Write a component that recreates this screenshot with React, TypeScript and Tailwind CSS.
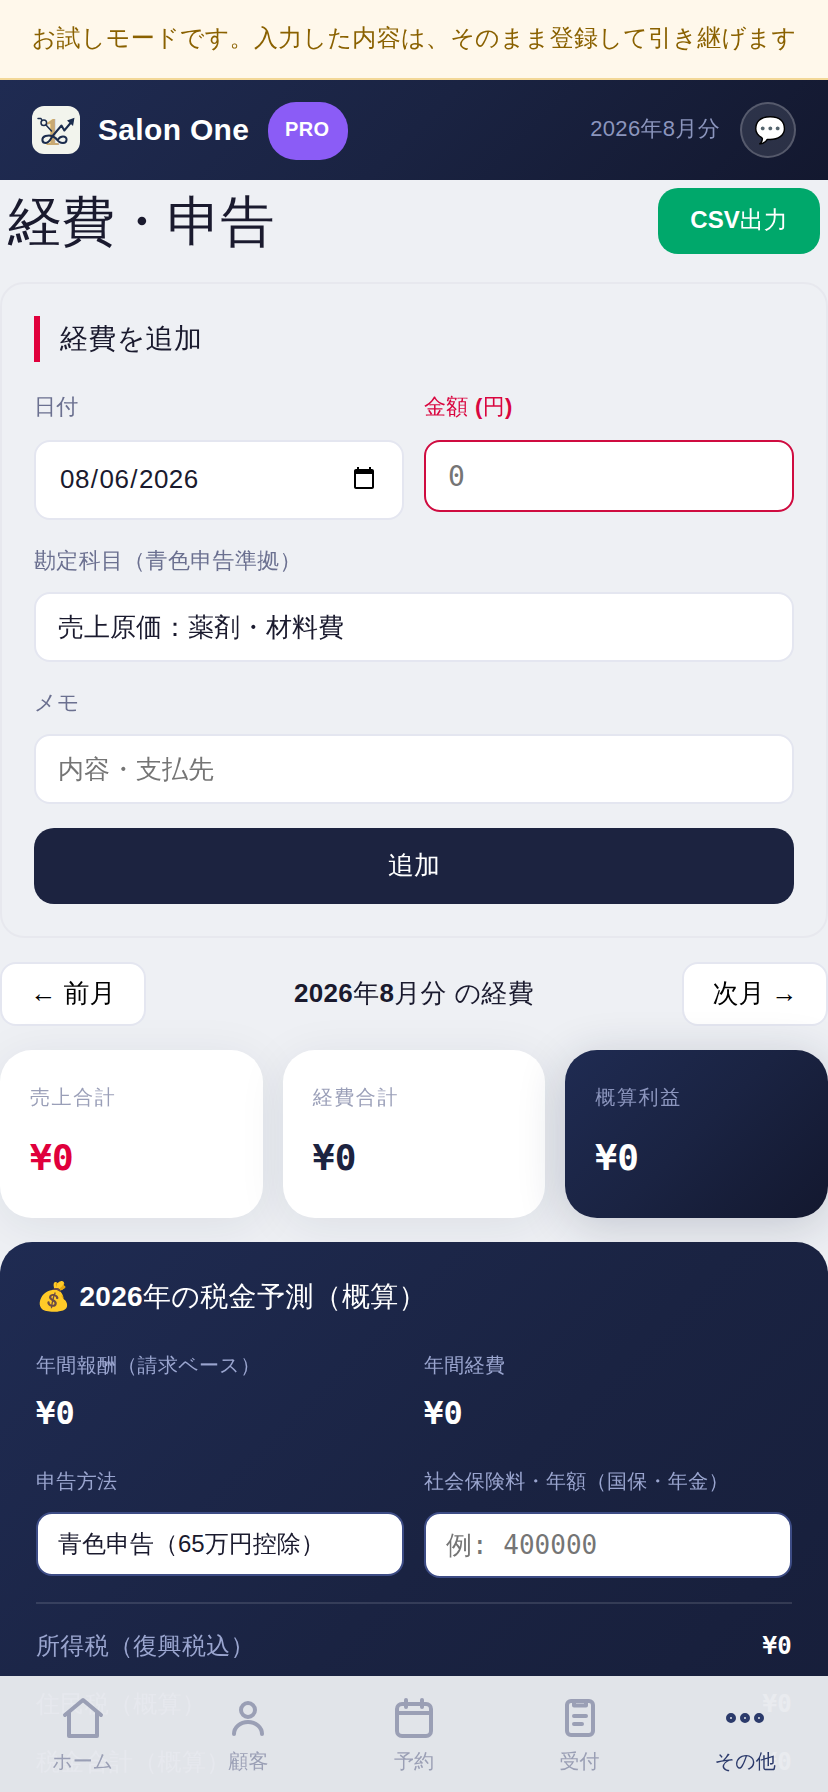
import { useState } from 'react'
import type { ReactNode } from 'react'
import clsx from 'clsx'

const sans = "font-['Liberation_Sans','WenQuanYi_Zen_Hei','Noto_Sans_CJK_JP',sans-serif]";
const mono = "font-['DejaVu_Sans_Mono','WenQuanYi_Zen_Hei','Noto_Sans_CJK_JP',monospace]";

const tabs: { id: string; label: string; icon: ReactNode }[] = [
  {
    id: 'home',
    label: 'ホーム',
    icon: <path d="M3 10.5 12 3l9 7.5M5 9.5V21h14V9.5" />,
  },
  {
    id: 'customers',
    label: '顧客',
    icon: (
      <>
        <circle cx="12" cy="8" r="3.5" />
        <path d="M5 20c0-3.3 3.1-6 7-6s7 2.7 7 6" />
      </>
    ),
  },
  {
    id: 'reserve',
    label: '予約',
    icon: (
      <>
        <rect x="3.5" y="5" width="17" height="16" rx="2.5" />
        <path d="M3.5 9.5h17M8 3v3.5M16 3v3.5" />
      </>
    ),
  },
  {
    id: 'reception',
    label: '受付',
    icon: (
      <>
        <rect x="5.5" y="3.5" width="13" height="17" rx="2" />
        <path d="M9 3.5v2.2h6V3.5M9 11h6M9 15h4" />
      </>
    ),
  },
  {
    id: 'more',
    label: 'その他',
    icon: (
      <>
        <circle cx="5" cy="12" r="1.5" />
        <circle cx="12" cy="12" r="1.5" />
        <circle cx="19" cy="12" r="1.5" />
      </>
    ),
  },
];

const taxRows = [
  { label: '所得税（復興税込）', value: '¥0' },
  { label: '住民税（概算）', value: '¥0' },
  { label: '税金合計（概算）', value: '¥0' },
];

function Logo() {
  return (
    <svg viewBox="0 0 48 48" className="h-12 w-12 rounded-xl bg-[#f2f4ed]">
      <text x="12" y="38.5" fontSize="40" fontWeight="700" fill="#c8a972" fontFamily="Liberation Serif" textLength="17" lengthAdjust="spacingAndGlyphs">1</text>
      <g fill="none" stroke="#1b2c4d" strokeWidth="2" strokeLinecap="round" strokeLinejoin="round">
        <circle cx="11.8" cy="16.8" r="2.8" strokeWidth="1.5" />
        <path d="M6 12.5h3l1 2M14 19l5.500 6" strokeWidth="1.500" />
        <path d="M39 16.500 32.300 24.500 29.500 19.500 21 29.500c-2.500 3.500-3.500 7.500-7 7.500-4.500 0-5-5.500-.5-7 4-1.200 7.500-.5 10.500 2.500" />
        <path d="M24 32.500c2 3 4.500 4.500 7 4.500 4.500 0 5-6.500 0-6.500-2.500 0-4 1.500-5 3" />
      </g>
      <path d="M42.500 11.700l-1.500 8.300-6-5.500z" fill="#1b2c4d" />
    </svg>
  )
}

function SummaryCard({ label, value, className, labelClass }: { label: string; value: string; className: string; labelClass: string }) {
  return (
    <div className={clsx('flex h-[168px] flex-1 flex-col rounded-[32px] px-[30px] pt-8', className)}>
      <span className={clsx('text-[20px] leading-[30px] tracking-[1.6px]', labelClass)}>{label}</span>
      <span className={clsx(mono, 'mt-[25px] text-[36px] leading-[42px] font-bold')}>{value}</span>
    </div>
  )
}

function App() {
  const [activeTab, setActiveTab] = useState('more');
  const [date, setDate] = useState('2026-08-06');

  return (
    <div className={clsx(sans, 'h-[1792px] w-full overflow-hidden bg-[#eef0f4] tracking-[0.32px] text-[#1a1a2e]')}>
      {/* お試しバナー */}
      <div className="flex h-20 items-center justify-center border-b-2 border-[#f3d898] bg-[#fff8eb] pb-0.5 text-[24px] whitespace-nowrap text-[#8a6100]">
        お試しモードです。入力した内容は、そのまま登録して引き継げます
      </div>

      <header className="flex h-[100px] items-center justify-between bg-linear-135 from-[#1f2b52] via-[#1a2342] to-[#13182f] px-8">
        <div className="flex items-center">
          <Logo />
          <span className="ml-[18px] pb-0.5 text-[30px] font-bold text-white">Salon One</span>
          <span className="mt-0.5 ml-[19px] flex h-[58px] w-20 items-center justify-center rounded-[28px] bg-[#8b5cf6] pr-0.5 pb-1 text-[20px] font-bold text-white">PRO</span>
        </div>
        <div className="flex items-center gap-5">
          <span className="pb-1 text-[22px] text-[#8b95bd]">2026年8月分</span>
          <button className="flex h-14 w-14 items-center justify-center rounded-full border-2 border-white/20 bg-white/10 pl-1 text-[26px]">💬</button>
        </div>
      </header>

      <main>
        <div className="flex h-[102px] items-start justify-between px-2 pt-2">
          <h1 className="text-[54px] leading-[66px] tracking-[-0.9px]">経費・申告</h1>
          <button className="h-[66px] w-[162px] rounded-[20px] bg-[#00a86b] pb-0.5 text-[24px] tracking-normal text-white">
            <span className="font-bold">CSV</span>出力
          </button>
        </div>

        {/* 経費フォーム */}
        <section className="h-[656px] rounded-3xl border-2 border-[#e7e8ee] p-8">
          <h2 className="h-[46px] border-l-[6px] border-[#e0003c] pl-5 text-[28px] leading-[46px]">経費を追加</h2>
          <div className="grid grid-cols-2 gap-5">
            <label className="flex flex-col">
              <span className="mt-[28px] mb-[17px] h-[33px] text-[22px] leading-[33px] text-[#6b7090]">日付</span>
              <input
                type="date"
                value={date}
                onChange={(e) => setDate(e.target.value)}
                className="h-20 rounded-2xl border-2 border-[#e4e6f0] bg-white px-[23px] pb-0.5 text-[26px] tracking-[0.45px]"
              />
            </label>
            <label className="flex flex-col">
              <span className="mt-[28px] mb-[17px] h-[33px] text-[22px] leading-[33px] text-[#d9063f]">
                金額 <span className="font-bold">(</span>円<span className="font-bold">)</span>
              </span>
              <input placeholder="0" className={clsx(mono, 'h-[72px] rounded-2xl border-2 border-[#cf0c40] bg-white px-[22px] text-[28px] tracking-normal placeholder:text-[#757575]')} />
            </label>
          </div>
          <label className="flex flex-col">
            <span className="mt-6 mb-[15px] h-[33px] text-[22px] leading-[33px] text-[#6b7090]">勘定科目（青色申告準拠）</span>
            <select className="h-[70px] appearance-none rounded-2xl border-2 border-[#e4e6f0] bg-white px-[22px] text-[26px] tracking-normal">
              <option>売上原価：薬剤・材料費</option>
            </select>
          </label>
          <label className="flex flex-col">
            <span className="mt-6 mb-[15px] h-[33px] text-[22px] leading-[33px] text-[#6b7090]">メモ</span>
            <input placeholder="内容・支払先" className="h-[70px] rounded-2xl border-2 border-[#e4e6f0] bg-white px-[22px] text-[26px] tracking-normal placeholder:text-[#757575]" />
          </label>
          <button className="mt-6 h-[76px] w-full rounded-[20px] bg-[#1c2340] pb-0.5 text-[26px] tracking-normal text-white">追加</button>
        </section>

        {/* 月送り */}
        <div className="mt-6 flex h-16 items-center justify-between">
          <button className="h-16 w-[146px] rounded-2xl border-2 border-[#e4e6f0] bg-white pb-0.5 text-[26px] tracking-normal text-black">← 前月</button>
          <span className="pb-0.5 text-[26px]">
            <span className="font-bold">2026</span>年<span className="font-bold">8</span>月分 の経費
          </span>
          <button className="h-16 w-[146px] rounded-2xl border-2 border-[#e4e6f0] bg-white pb-0.5 text-[26px] tracking-normal text-black">次月 →</button>
        </div>

        <div className="mt-6 flex gap-5">
          <SummaryCard label="売上合計" value="¥0" className="bg-white text-[#e0003c] shadow-[0_8px_48px_rgba(26,34,64,0.08)]" labelClass="text-[#9a9fb8]" />
          <SummaryCard label="経費合計" value="¥0" className="bg-white text-[#1c2340] shadow-[0_8px_48px_rgba(26,34,64,0.08)]" labelClass="text-[#9a9fb8]" />
          <SummaryCard label="概算利益" value="¥0" className="bg-linear-135 from-[#1f2b52] via-[#1a2342] to-[#13182f] text-white shadow-[0_8px_48px_rgba(26,34,64,0.2)]" labelClass="text-[#8b95bd]" />
        </div>

        {/* 税金予測 */}
        <section className="relative mt-6 h-[640px] rounded-[32px] bg-linear-135 from-[#1f2b52] via-[#1a2342] to-[#161d38] px-9 pt-8 text-white">
          <h2 className="h-[44px] text-[28px] leading-[46px]">
            <span className="font-bold">💰 2026</span>年の税金予測（概算）
          </h2>
          <div className="mt-8 grid grid-cols-2 gap-5">
            <div className="flex flex-col">
              <span className="text-[20px] leading-[30px] text-[#9aa5cf]">年間報酬（請求ベース）</span>
              <span className={clsx(mono, 'mt-[14px] mb-px text-[32px] leading-[38px] font-bold')}>¥0</span>
            </div>
            <div className="flex flex-col">
              <span className="text-[20px] leading-[30px] text-[#9aa5cf]">年間経費</span>
              <span className={clsx(mono, 'mt-[14px] mb-px text-[32px] leading-[38px] font-bold')}>¥0</span>
            </div>
          </div>
          <div className="mt-[33px] grid grid-cols-2 items-start gap-5">
            <label className="flex flex-col">
              <span className="text-[20px] leading-[30px] text-[#9aa5cf]">申告方法</span>
              <select className="mt-4 h-16 appearance-none rounded-2xl border-2 border-[#3d4c85] bg-white px-5 text-[24px] tracking-normal text-[#1a1a2e]">
                <option>青色申告（65万円控除）</option>
              </select>
            </label>
            <label className="flex flex-col">
              <span className="text-[20px] leading-[30px] whitespace-nowrap text-[#9aa5cf]">社会保険料・年額（国保・年金）</span>
              <input placeholder="例: 400000" className={clsx(mono, 'mt-4 h-[66px] rounded-2xl border-2 border-[#3d4c85] bg-white px-5 text-[26px] tracking-normal placeholder:text-[#757575]')} />
            </label>
          </div>
          <div className="mt-6 border-t-2 border-white/12 pt-[13px]">
            {taxRows.map((row) => (
              <div key={row.label} className="flex h-[58px] items-center justify-between text-[24px]">
                <span className="text-[#9aa5cf]">{row.label}</span>
                <span className={clsx(mono, 'font-bold')}>{row.value}</span>
              </div>
            ))}
          </div>
        </section>
      </main>

      <nav className="fixed inset-x-0 bottom-0 grid h-[116px] grid-cols-5 bg-[#e8eaee]/97">
        {tabs.map((tab) => (
          <button
            key={tab.id}
            onClick={() => setActiveTab(tab.id)}
            className={clsx('flex flex-col items-center pt-[18px] text-[20px] tracking-[0.1px]', activeTab === tab.id ? 'text-[#2b3a6b]' : 'text-[#9a9fb5]')}
          >
            <svg viewBox="0 0 24 24" className="h-12 w-12" fill="none" stroke="currentColor" strokeWidth="2" strokeLinecap="round" strokeLinejoin="round">
              {tab.icon}
            </svg>
            <span className="mt-1 leading-[30px]">{tab.label}</span>
          </button>
        ))}
      </nav>
    </div>
  )
}

export default App
